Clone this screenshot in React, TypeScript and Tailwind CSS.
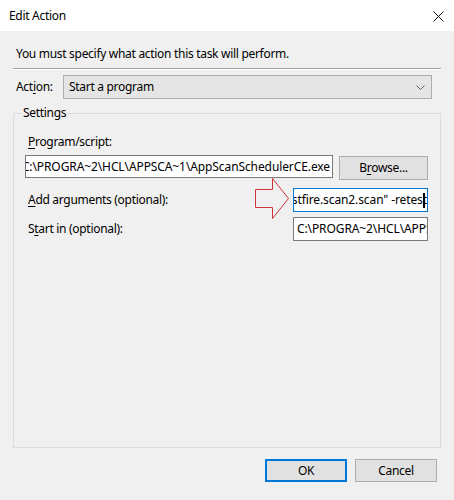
import React from "react";

const font = { fontFamily: '"Noto Sans", "Open Sans", sans-serif' };

function U({ children }: { children: React.ReactNode }) {
  return <span className="underline underline-offset-[2px] decoration-[1px]">{children}</span>;
}

export default function App() {
  return (
    <div
      className="w-[454px] h-[500px] bg-[#f0f0f0] flex flex-col text-[12px] leading-[16px] tracking-[-0.3px] text-black overflow-hidden relative"
      style={font}
    >
      {/* title bar */}
      <div className="h-[31px] bg-white flex items-center justify-between pl-[9px] pr-[10px] shrink-0">
        <span className="text-[12px]">Edit Action</span>
        <svg width="11" height="11" viewBox="0 0 11 11" className="mt-[1px]">
          <path d="M0.5 0.5 L10.5 10.5 M10.5 0.5 L0.5 10.5" stroke="#111" strokeWidth="1" />
        </svg>
      </div>

      <div className="flex flex-col px-[13px] flex-1">
        {/* message */}
        <div className="mt-[15px] pl-[3px]">You must specify what action this task will perform.</div>
        <div className="mt-[6px] h-[2px] w-[428px] border-t border-[#a0a0a0] border-b border-b-white" />

        {/* action selector */}
        <div className="mt-[5px] flex items-center h-[24px]">
          <span className="pl-[3px] w-[50px]">
            Act<U>i</U>on:
          </span>
          <div className="w-[369px] h-[24px] bg-[#e5e5e5] border border-[#adadad] flex items-center justify-between pl-[5px] pr-[6px]">
            <span>Start a program</span>
            <svg width="9" height="5" viewBox="0 0 9 5">
              <path d="M0.5 0.5 L4.5 4.5 L8.5 0.5" stroke="#606060" strokeWidth="1" fill="none" />
            </svg>
          </div>
        </div>

        {/* settings group */}
        <div className="mt-[14px] relative w-[428px] h-[335px] border border-[#dcdcdc]">
          <span className="absolute left-[8px] -top-[9px] px-[1px] bg-[#f0f0f0]">Settings</span>

          <div className="flex flex-col pl-[11px] pt-[20px]">
            <span className="pl-[3px]">
              <U>P</U>rogram/script:
            </span>

            <div className="mt-[5px] flex items-start">
              <div className="w-[308px] h-[23px] bg-white border border-[#7a7a7a] overflow-hidden flex items-center justify-end pr-[2px] whitespace-nowrap">
                <span className="tracking-[-0.1px]">C:\PROGRA~2\HCL\APPSCA~1\AppScanSchedulerCE.exe</span>
              </div>
              <button className="ml-[6px] mt-[1px] w-[89px] h-[24px] bg-[#e1e1e1] border border-[#adadad] flex items-center justify-center">
                <span>
                  B<U>r</U>owse...
                </span>
              </button>
            </div>

            <div className="mt-[8px] flex items-center h-[24px]">
              <span className="pl-[3px] w-[268px]">
                <U>A</U>dd arguments (optional):
              </span>
              <div className="w-[135px] h-[24px] bg-white border border-[#0078d7] overflow-hidden flex items-center justify-end whitespace-nowrap relative">
                <span className="tracking-[-0.1px]">/scan "testfire.scan2.scan" -retest</span>
                <span className="absolute right-[2px] top-[4px] w-[2px] h-[15px] bg-black" />
              </div>
            </div>

            <div className="mt-[5px] flex items-center h-[24px]">
              <span className="pl-[3px] w-[268px]">
                S<U>t</U>art in (optional):
              </span>
              <div className="w-[135px] h-[24px] bg-white border border-[#7a7a7a] overflow-hidden flex items-center pl-[3px] whitespace-nowrap">
                <span className="tracking-[-0.1px]">C:\PROGRA~2\HCL\APPSCA~1</span>
              </div>
            </div>
          </div>
        </div>

        {/* dialog buttons */}
        <div className="mt-[11px] flex justify-end gap-[8px] pr-[4px]">
          <button className="w-[82px] h-[23px] bg-[#e1e1e1] border-2 border-[#0078d7] flex items-center justify-center">
            OK
          </button>
          <button className="w-[82px] h-[23px] bg-[#e1e1e1] border border-[#adadad] flex items-center justify-center">
            Cancel
          </button>
        </div>
      </div>

      {/* callout arrow pointing at the arguments box */}
      <svg
        className="absolute left-[255px] top-[178px]"
        width="35"
        height="42"
        viewBox="0 0 35 42"
      >
        <path
          d="M0.5 11.5 L17.5 11.5 L17.5 0.5 L33.5 20.5 L17.5 40.5 L17.5 29.5 L0.5 29.5 Z"
          fill="none"
          stroke="#d2323a"
          strokeWidth="1"
        />
      </svg>
    </div>
  );
}
